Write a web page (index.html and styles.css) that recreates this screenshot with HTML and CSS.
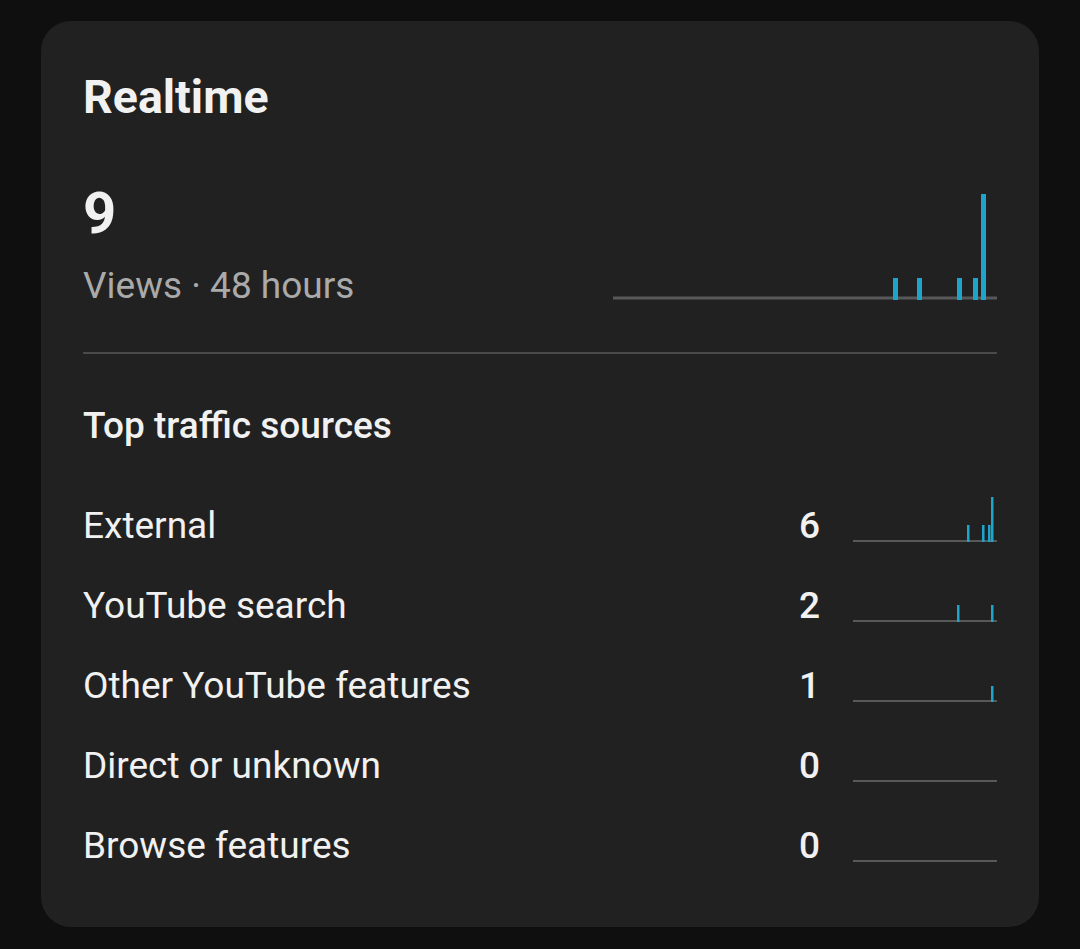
FILE: index.html
```html
<!DOCTYPE html>
<html lang="en">
<head>
<meta charset="utf-8">
<title>Realtime</title>
<link rel="stylesheet" href="styles.css">
</head>
<body>
<section class="card">
  <h1 class="title">Realtime</h1>
  <div class="stats">
    <div class="stats-text">
      <div class="big-number">9</div>
      <div class="label">Views · 48 hours</div>
    </div>
    <svg class="main-chart" width="384" height="110" viewBox="0 0 384 110">
      <rect class="axis" x="0" y="105.5" width="384" height="3"/>
      <rect class="bar" x="280" y="87" width="5" height="22"/>
      <rect class="bar" x="304" y="87" width="5" height="22"/>
      <rect class="bar" x="344" y="87" width="5" height="22"/>
      <rect class="bar" x="360" y="87" width="5" height="22"/>
      <rect class="bar" x="368" y="3" width="5" height="106"/>
    </svg>
  </div>
  <hr class="divider">
  <h2 class="subtitle">Top traffic sources</h2>
  <ul class="sources">
    <li class="source">
      <span class="source-name">External</span>
      <span class="source-count">6</span>
      <svg class="mini-chart" width="144" height="48" viewBox="0 0 144 48">
        <rect class="axis" x="0" y="45" width="144" height="2"/>
        <rect class="bar" x="114" y="30" width="2.5" height="17"/>
        <rect class="bar" x="129" y="30" width="2.5" height="17"/>
        <rect class="bar" x="135" y="30" width="2.5" height="17"/>
        <rect class="bar" x="138" y="2" width="2.5" height="45"/>
      </svg>
    </li>
    <li class="source">
      <span class="source-name">YouTube search</span>
      <span class="source-count">2</span>
      <svg class="mini-chart" width="144" height="48" viewBox="0 0 144 48">
        <rect class="axis" x="0" y="45" width="144" height="2"/>
        <rect class="bar" x="104" y="30" width="2.5" height="17"/>
        <rect class="bar" x="138" y="30" width="2.5" height="17"/>
      </svg>
    </li>
    <li class="source">
      <span class="source-name">Other YouTube features</span>
      <span class="source-count">1</span>
      <svg class="mini-chart" width="144" height="48" viewBox="0 0 144 48">
        <rect class="axis" x="0" y="45" width="144" height="2"/>
        <rect class="bar" x="138" y="31" width="2.5" height="16"/>
      </svg>
    </li>
    <li class="source">
      <span class="source-name">Direct or unknown</span>
      <span class="source-count">0</span>
      <svg class="mini-chart" width="144" height="48" viewBox="0 0 144 48">
        <rect class="axis" x="0" y="45" width="144" height="2"/>
      </svg>
    </li>
    <li class="source">
      <span class="source-name">Browse features</span>
      <span class="source-count">0</span>
      <svg class="mini-chart" width="144" height="48" viewBox="0 0 144 48">
        <rect class="axis" x="0" y="45" width="144" height="2"/>
      </svg>
    </li>
  </ul>
</section>
</body>
</html>
```

FILE: styles.css
```css
* {
  box-sizing: border-box;
}

html, body {
  margin: 0;
  padding: 0;
  background: #0f0f0f;
}

body {
  font-family: Roboto, "Noto Sans", "Liberation Sans", sans-serif;
  color: #f1f1f1;
  padding: 21px 41px 0 41px;
}

.card {
  width: 998px;
  height: 906px;
  background: #212121;
  border-radius: 30px;
  padding: 50px 42px 0 42px;
}

.title {
  margin: 0;
  font-size: 46.5px;
  line-height: 52px;
  font-weight: 700;
  color: #f1f1f1;
}

.stats {
  margin-top: 58px;
  display: flex;
  justify-content: space-between;
  align-items: flex-end;
}

.big-number {
  font-size: 58px;
  line-height: 64px;
  font-weight: 700;
}

.label {
  margin-top: 21px;
  font-size: 37px;
  line-height: 40px;
  color: #aaaaaa;
}

.main-chart {
  display: block;
  margin-bottom: 5px;
}

.axis {
  fill: #585858;
}

.bar {
  fill: #1fa5cc;
}

.divider {
  margin: 46px 0 0 0;
  border: 0;
  height: 2px;
  background: #4a4a4a;
}

.subtitle {
  margin: 52px 0 0 0;
  font-size: 37px;
  line-height: 40px;
  font-weight: 500;
}

.sources {
  list-style: none;
  margin: 40px 0 0 0;
  padding: 0;
}

.source {
  height: 80px;
  display: grid;
  grid-template-columns: 1fr 60px 144px;
  column-gap: 33px;
  align-items: start;
}

.source-name,
.source-count {
  margin-top: 20px;
  font-size: 37px;
  line-height: 40px;
}

.source-count {
  text-align: right;
  font-weight: 500;
}

.mini-chart {
  display: block;
  margin-top: 9px;
}
```
